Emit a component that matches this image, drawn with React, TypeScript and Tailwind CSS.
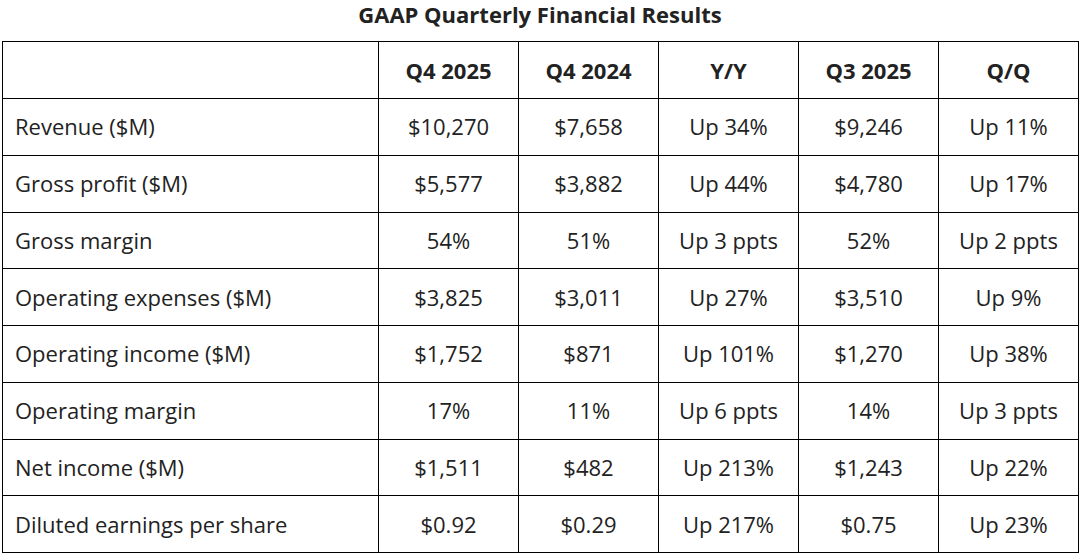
const rows: string[][] = [
  ['Revenue ($M)', '$10,270', '$7,658', 'Up 34%', '$9,246', 'Up 11%'],
  ['Gross profit ($M)', '$5,577', '$3,882', 'Up 44%', '$4,780', 'Up 17%'],
  ['Gross margin', '54%', '51%', 'Up 3 ppts', '52%', 'Up 2 ppts'],
  ['Operating expenses ($M)', '$3,825', '$3,011', 'Up 27%', '$3,510', 'Up 9%'],
  ['Operating income ($M)', '$1,752', '$871', 'Up 101%', '$1,270', 'Up 38%'],
  ['Operating margin', '17%', '11%', 'Up 6 ppts', '14%', 'Up 3 ppts'],
  ['Net income ($M)', '$1,511', '$482', 'Up 213%', '$1,243', 'Up 22%'],
  ['Diluted earnings per share', '$0.92', '$0.29', 'Up 217%', '$0.75', 'Up 23%'],
]

const headers = ['Q4 2025', 'Q4 2024', 'Y/Y', 'Q3 2025', 'Q/Q']

export default function App() {
  return (
    <div className="w-[1080px] h-[555px] bg-white text-[#222] font-['Open_Sans',sans-serif] overflow-hidden">
      <h2 className="text-center text-[22px] font-bold leading-[28px] mb-[13px]">
        GAAP Quarterly Financial Results
      </h2>
      <table className="ml-[2px] w-[1076px] border-collapse table-fixed text-[22px]">
        <colgroup>
          <col className="w-[376px]" />
          <col className="w-[140px]" />
          <col className="w-[140px]" />
          <col className="w-[140px]" />
          <col className="w-[140px]" />
          <col className="w-[140px]" />
        </colgroup>
        <thead>
          <tr className="h-[57px]">
            <th className="border border-black" />
            {headers.map((h) => (
              <th key={h} className="border border-black text-center font-bold p-0">
                {h}
              </th>
            ))}
          </tr>
        </thead>
        <tbody>
          {rows.map((r) => (
            <tr key={r[0]} className="h-[56.75px]">
              {r.map((c, i) => (
                <td
                  key={i}
                  className={
                    i === 0
                      ? 'border border-black pl-[12px] text-left'
                      : 'border border-black text-center p-0'
                  }
                >
                  {c}
                </td>
              ))}
            </tr>
          ))}
        </tbody>
      </table>
    </div>
  )
}
